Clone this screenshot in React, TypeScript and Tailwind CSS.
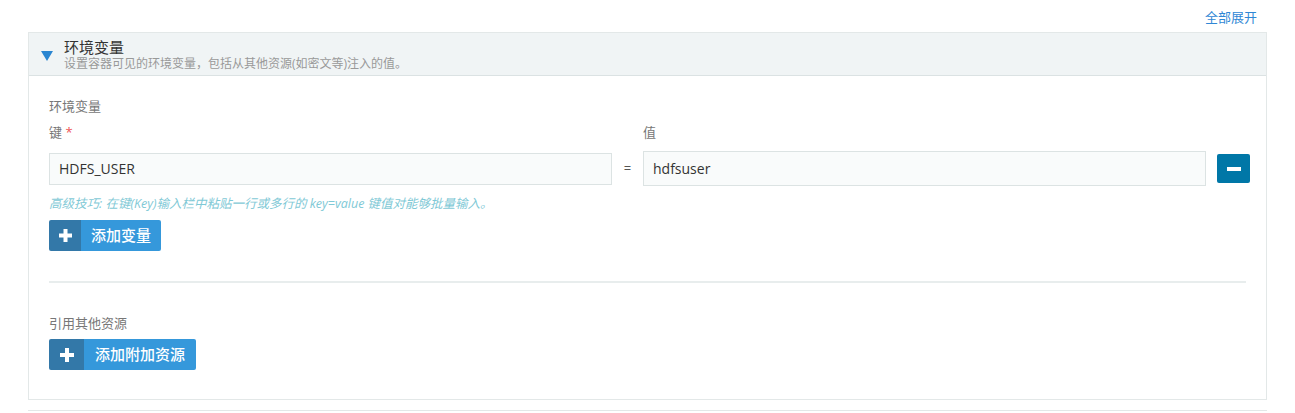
export default function App() {
  return (
    <div className="w-[1295px] h-[413px] overflow-hidden bg-white font-['Open_Sans','Noto_Sans_CJK_SC',sans-serif]">
      <div className="flex justify-end h-[32px] pr-[38px] pt-[7px]">
        <a className="text-[13px] leading-[20px] text-[#2f87d5] cursor-pointer">全部展开</a>
      </div>

      <div className="mx-[28px] border border-[#e3e8e8]">
        <div className="h-[43px] bg-[#f0f4f5] border-b border-[#dbe2e3] flex items-center pl-[12px]">
          <svg width="12" height="10" viewBox="0 0 12 10" className="mt-[4px]">
            <polygon points="0,0 12,0 6,10" fill="#2b86d1" />
          </svg>
          <div className="ml-[11px] flex flex-col">
            <div className="text-[15px] leading-[18px] font-normal text-[#333]">环境变量</div>
            <div className="text-[12px] leading-[15px] text-[#999]">设置容器可见的环境变量，包括从其他资源(如密文等)注入的值。</div>
          </div>
        </div>

        <div className="px-[20px] pt-[20px] pb-[29px]">
          <div className="text-[13px] leading-[20px] text-[#777]">环境变量</div>
          <div className="flex mt-[6px] text-[13px] leading-[20px] text-[#777]">
            <div className="w-[563px] shrink-0">
              键 <span className="text-[#e55]">*</span>
            </div>
            <div className="w-[31px] shrink-0" />
            <div>值</div>
          </div>

          <div className="flex items-center mt-[9px] h-[35px] -mr-[4px]">
            <div className="w-[563px] shrink-0 h-[32px] border border-[#dce3e3] bg-[#f9fbfb] flex items-center px-[9px] text-[14px] text-[#333]">
              HDFS_USER
            </div>
            <div className="w-[31px] shrink-0 text-center text-[13px] text-[#555]">=</div>
            <div className="w-[563px] shrink-0 h-[35px] border border-[#dce3e3] bg-[#f9fbfb] flex items-center px-[9px] text-[14px] text-[#333]">
              hdfsuser
            </div>
            <button className="ml-[11px] shrink-0 w-[33px] h-[29px] rounded-[2px] bg-[#0077a7] flex items-center justify-center">
              <span className="block w-[14px] h-[4px] bg-white" />
            </button>
          </div>

          <div className="mt-[10px] text-[12.5px] leading-[16px] italic text-[#7fc9d6]">
            高级技巧: 在键(Key)输入栏中粘贴一行或多行的 key=value 键值对能够批量输入。
          </div>

          <button className="mt-[8px] flex h-[31px] rounded-[2px] overflow-hidden">
            <span className="w-[32px] h-full bg-[#3378a8] flex items-center justify-center">
              <svg width="13" height="13" viewBox="0 0 13 13">
                <rect x="4.5" y="0" width="4" height="13" fill="white" />
                <rect x="0" y="4.5" width="13" height="4" fill="white" />
              </svg>
            </span>
            <span className="h-full bg-[#3598db] px-[10px] flex items-center text-[15px] font-medium text-white">添加变量</span>
          </button>

          <div className="mt-[30px] h-[2px] bg-[#e8eded]" />

          <div className="mt-[30px] text-[13px] leading-[20px] text-[#777]">引用其他资源</div>
          <button className="mt-[6px] flex h-[31px] rounded-[2px] overflow-hidden">
            <span className="w-[35px] h-full bg-[#3378a8] flex items-center justify-center">
              <svg width="14" height="14" viewBox="0 0 14 14">
                <rect x="5" y="0" width="4" height="14" fill="white" />
                <rect x="0" y="5" width="14" height="4" fill="white" />
              </svg>
            </span>
            <span className="h-full bg-[#3598db] px-[11px] flex items-center text-[15px] font-medium text-white">添加附加资源</span>
          </button>
        </div>
      </div>

      <div className="mx-[28px] mt-[10px] border-t border-[#e3e8e8] h-[2px]" />
    </div>
  );
}
